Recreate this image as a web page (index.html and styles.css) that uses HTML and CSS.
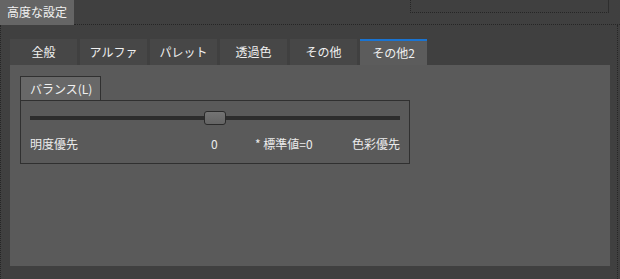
FILE: index.html
```html
<!DOCTYPE html>
<html lang="ja">
<head>
  <meta charset="UTF-8" />
  <title>高度な設定</title>
  <link rel="stylesheet" href="styles.css">
</head>
<body>
  <div class="top">
    <div class="title">高度な設定</div>
    <div class="top-rest"><div class="top-box"></div></div>
  </div>
  <div class="frame">
    <nav class="tabs">
      <div class="tab">全般</div>
      <div class="tab">アルファ</div>
      <div class="tab">パレット</div>
      <div class="tab">透過色</div>
      <div class="tab">その他</div>
      <div class="tab active">その他2</div>
    </nav>
    <div class="panel">
      <div class="group-label">バランス(L)</div>
      <div class="group">
        <div class="slider">
          <div class="track"></div>
          <div class="thumb"></div>
        </div>
        <div class="scale">
          <span>明度優先</span>
          <span>0</span>
          <span>* 標準値=0</span>
          <span class="end">色彩優先</span>
        </div>
      </div>
    </div>
  </div>
</body>
</html>
```

FILE: styles.css
```css
body { margin: 0; background-color: #404040; color: #ececec; font-family: "Noto Sans CJK JP", "Noto Sans", sans-serif; font-size: 12px; overflow: hidden; }
.top { display: flex; height: 25px; }
.title { background-color: #656565; padding: 0 7px; line-height: 24px; color: #f2f2f2; }
.top-rest { flex: 1; display: flex; justify-content: flex-end; border-bottom: 1px dotted #262626; }
.top-box { width: 197px; height: 12px; margin-right: 11px; border-left: 1px dotted #262626; border-bottom: 1px dotted #262626; border-right: 1px solid #2e2e2e; }
.frame { height: 251px; border: 1px dotted #262626; border-top: none; margin-right: 2px; padding: 14px 0 0 9px; }
.tabs { display: flex; gap: 3px; height: 26px; }
.tab { width: 67px; background-color: #474747; text-align: center; line-height: 26px; color: #f0f0f0; }
.tab.active { background-color: #5c5c5c; border-top: 2px solid #1a74d2; line-height: 23px; }
.panel { width: 580px; height: 190px; background-color: #5a5a5a; padding: 11px 10px 0; }
.group-label { display: inline-block; height: 23px; line-height: 23px; padding: 0 8px 0 9px; background-color: #686868; border: 1px solid #303030; border-bottom: none; color: #f0f0f0; }
.group { width: 370px; height: 62px; border: 1px solid #303030; padding: 0 9px; }
.slider { position: relative; height: 14px; margin-top: 10px; }
.track { position: absolute; left: 0; right: 0; top: 5px; height: 4px; background-color: #2d2d2d; }
.thumb { position: absolute; left: 174px; top: 0; width: 20px; height: 12px; border: 1px solid #2a2a2a; border-radius: 3px; background: linear-gradient(#747474, #646464); }
.scale { display: grid; grid-template-columns: 181px 44px 1fr auto; margin-top: 11px; line-height: 16px; color: #ececec; }
.scale .end { text-align: right; }
```
